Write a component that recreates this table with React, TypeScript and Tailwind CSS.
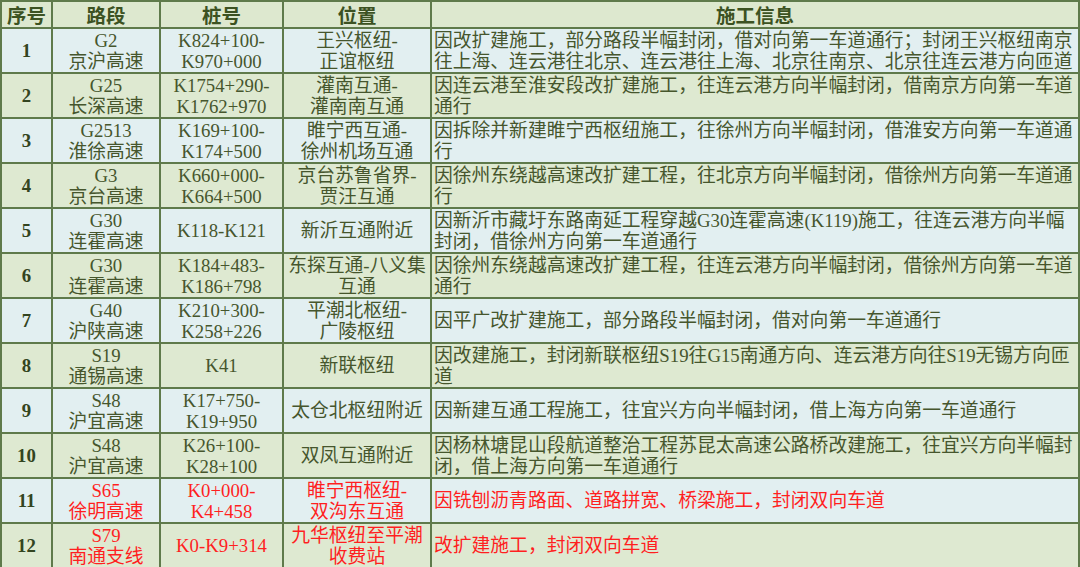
import React from 'react';

type Row = {
  no: string;
  road: [string, string];
  stake: [string, string?];
  place: [string, string?];
  info: string[];
  red?: boolean;
};

const rows: Row[] = [
  {
    no: '1',
    road: ['G2', '京沪高速'],
    stake: ['K824+100-', 'K970+000'],
    place: ['王兴枢纽-', '正谊枢纽'],
    info: [
      '因改扩建施工，部分路段半幅封闭，借对向第一车道通行；封闭王兴枢纽南京',
      '往上海、连云港往北京、连云港往上海、北京往南京、北京往连云港方向匝道',
    ],
  },
  {
    no: '2',
    road: ['G25', '长深高速'],
    stake: ['K1754+290-', 'K1762+970'],
    place: ['灌南互通-', '灌南南互通'],
    info: ['因连云港至淮安段改扩建施工，往连云港方向半幅封闭，借南京方向第一车道', '通行'],
  },
  {
    no: '3',
    road: ['G2513', '淮徐高速'],
    stake: ['K169+100-', 'K174+500'],
    place: ['睢宁西互通-', '徐州机场互通'],
    info: ['因拆除并新建睢宁西枢纽施工，往徐州方向半幅封闭，借淮安方向第一车道通', '行'],
  },
  {
    no: '4',
    road: ['G3', '京台高速'],
    stake: ['K660+000-', 'K664+500'],
    place: ['京台苏鲁省界-', '贾汪互通'],
    info: ['因徐州东绕越高速改扩建工程，往北京方向半幅封闭，借徐州方向第一车道通', '行'],
  },
  {
    no: '5',
    road: ['G30', '连霍高速'],
    stake: ['K118-K121'],
    place: ['新沂互通附近'],
    info: ['因新沂市藏圩东路南延工程穿越G30连霍高速(K119)施工，往连云港方向半幅', '封闭，借徐州方向第一车道通行'],
  },
  {
    no: '6',
    road: ['G30', '连霍高速'],
    stake: ['K184+483-', 'K186+798'],
    place: ['东探互通-八义集', '互通'],
    info: ['因徐州东绕越高速改扩建工程，往连云港方向半幅封闭，借徐州方向第一车道', '通行'],
  },
  {
    no: '7',
    road: ['G40', '沪陕高速'],
    stake: ['K210+300-', 'K258+226'],
    place: ['平潮北枢纽-', '广陵枢纽'],
    info: ['因平广改扩建施工，部分路段半幅封闭，借对向第一车道通行'],
  },
  {
    no: '8',
    road: ['S19', '通锡高速'],
    stake: ['K41'],
    place: ['新联枢纽'],
    info: ['因改建施工，封闭新联枢纽S19往G15南通方向、连云港方向往S19无锡方向匝', '道'],
  },
  {
    no: '9',
    road: ['S48', '沪宜高速'],
    stake: ['K17+750-', 'K19+950'],
    place: ['太仓北枢纽附近'],
    info: ['因新建互通工程施工，往宜兴方向半幅封闭，借上海方向第一车道通行'],
  },
  {
    no: '10',
    road: ['S48', '沪宜高速'],
    stake: ['K26+100-', 'K28+100'],
    place: ['双凤互通附近'],
    info: ['因杨林塘昆山段航道整治工程苏昆太高速公路桥改建施工，往宜兴方向半幅封', '闭，借上海方向第一车道通行'],
  },
  {
    no: '11',
    road: ['S65', '徐明高速'],
    stake: ['K0+000-', 'K4+458'],
    place: ['睢宁西枢纽-', '双沟东互通'],
    info: ['因铣刨沥青路面、道路拼宽、桥梁施工，封闭双向车道'],
    red: true,
  },
  {
    no: '12',
    road: ['S79', '南通支线'],
    stake: ['K0-K9+314'],
    place: ['九华枢纽至平潮', '收费站'],
    info: ['改扩建施工，封闭双向车道'],
    red: true,
  },
];

const cell = 'border-2 border-[#5f7a4b] p-0 align-middle';

function Lines({ lines, center = true }: { lines: (string | undefined)[]; center?: boolean }) {
  return (
    <div className={`h-[43px] flex flex-col justify-center overflow-hidden ${center ? 'items-center' : 'items-start pl-[2px]'}`}>
      {lines.filter(Boolean).map((l, i) => (
        <span key={i} className="whitespace-nowrap">{l}</span>
      ))}
    </div>
  );
}

export default function App() {
  return (
    <div className="relative w-[1080px] h-[567px] overflow-hidden bg-[#e4eedc]">
      {/* bamboo leaves peeking through the top-right corner */}
      <svg className="absolute right-0 top-0 w-[120px] h-[80px] opacity-60" viewBox="0 0 120 80">
        <path d="M40 78 C70 55 95 35 120 18" stroke="#7fb24a" strokeWidth="3" fill="none" />
        <path d="M70 80 C85 60 100 48 118 40" stroke="#8cc05a" strokeWidth="2" fill="none" />
        <path d="M95 0 C100 10 108 20 120 26" stroke="#6fa040" strokeWidth="2" fill="none" />
        <path d="M60 60 L85 52" stroke="#8cc05a" strokeWidth="2" fill="none" />
      </svg>
      <table
        className="relative w-[1080px] border-collapse table-fixed text-[#46562d] text-[18.8px] leading-[21px]"
        style={{ fontFamily: '"Liberation Serif", "Noto Sans CJK SC", serif' }}
      >
        <colgroup>
          <col className="w-[51px]" />
          <col className="w-[108px]" />
          <col className="w-[123px]" />
          <col className="w-[148px]" />
          <col />
        </colgroup>
        <thead>
          <tr
            className="bg-[#dde8cf] text-[#3c5222] font-bold text-[19.5px] leading-[24px]"
            style={{ fontFamily: '"Noto Sans CJK SC", sans-serif' }}
          >
            <th className={cell}><div className="h-[25px] flex items-center justify-center">序号</div></th>
            <th className={cell}><div className="h-[25px] flex items-center justify-center">路段</div></th>
            <th className={cell}><div className="h-[25px] flex items-center justify-center">桩号</div></th>
            <th className={cell}><div className="h-[25px] flex items-center justify-center">位置</div></th>
            <th className={cell}><div className="h-[25px] flex items-center justify-center">施工信息</div></th>
          </tr>
        </thead>
        <tbody>
          {rows.map((r, i) => (
            <tr
              key={r.no}
              className={`${i % 2 === 0 ? 'bg-[#e2eff1]' : 'bg-[#dee9d1]'} ${r.red ? 'text-[#ff1f1f]' : ''}`}
            >
              <td className={`${cell} text-center font-bold text-[#334420]`}>
                <Lines lines={[r.no]} />
              </td>
              <td className={cell}>
                <Lines lines={r.road} />
              </td>
              <td className={cell}>
                <Lines lines={r.stake} />
              </td>
              <td className={cell}>
                <Lines lines={r.place} />
              </td>
              <td className={cell}>
                <Lines lines={r.info} center={false} />
              </td>
            </tr>
          ))}
        </tbody>
      </table>
    </div>
  );
}
